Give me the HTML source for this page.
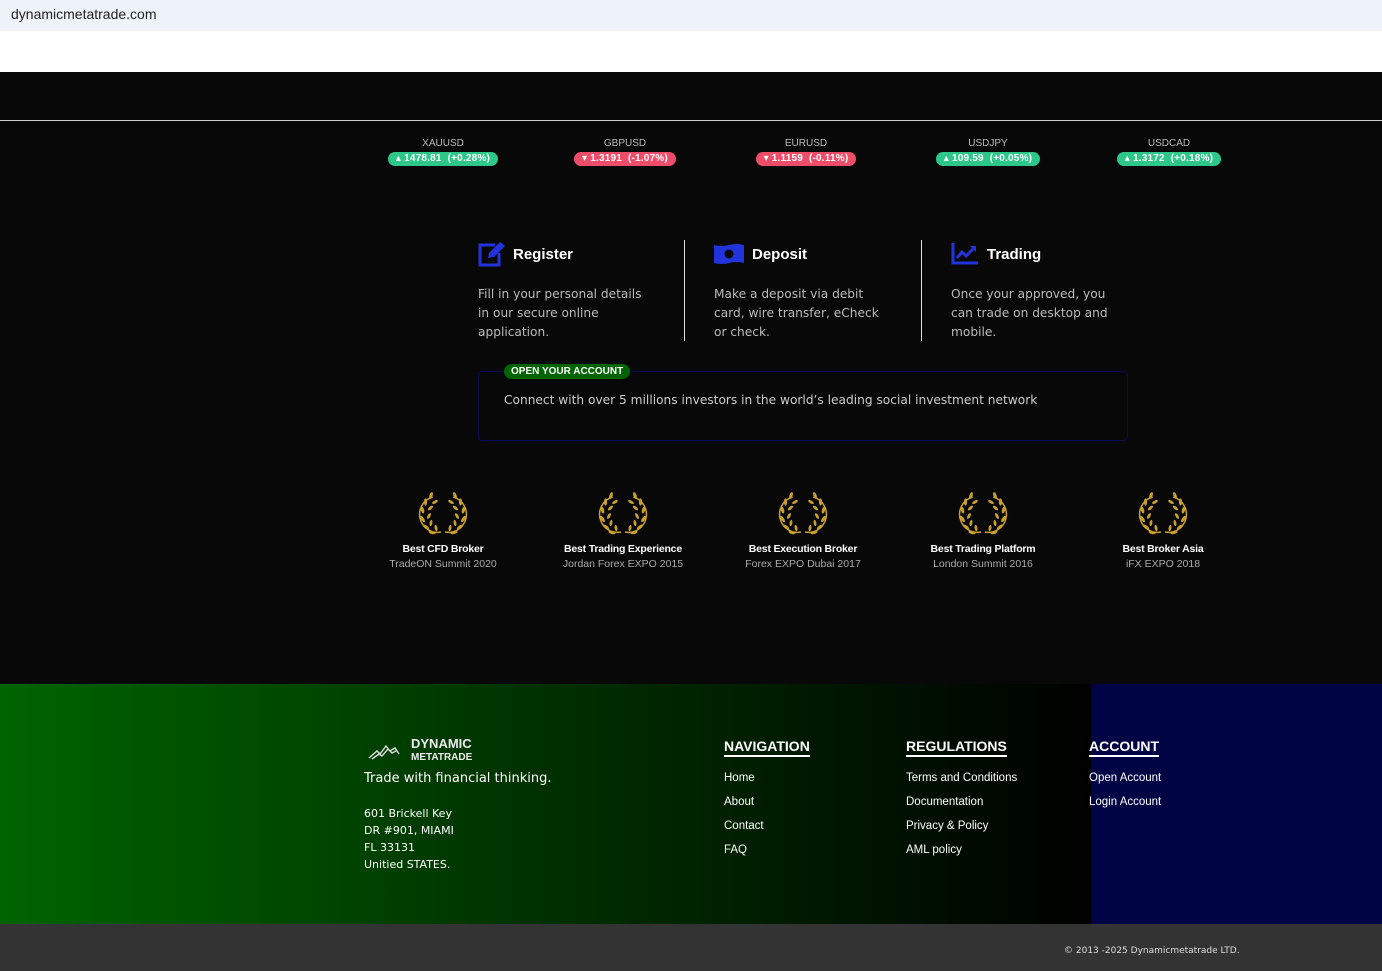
<!DOCTYPE html>
<html><head><meta charset="utf-8"><style>
*{margin:0;padding:0;box-sizing:border-box}
body{width:1382px;height:971px;overflow:hidden;background:#080808;font-family:"Liberation Sans","DejaVu Sans",sans-serif;position:relative;color:#fff}
.a{position:absolute}
.tk{position:absolute;top:138px;text-align:center;width:160px;font-size:10px;color:#bbb}
.pill{display:inline-block;margin-top:3px;border-radius:7px;font-size:10px;font-weight:bold;color:#fff;padding:1px 8px;line-height:12px;letter-spacing:0.2px}
.g{background:#2ec78a}.r{background:#ee4d6a}
.st{position:absolute;top:240px}
.st h3{font-size:15px;font-weight:bold;display:flex;align-items:center;gap:8px;height:28px}
.st p{margin-top:17px;font-family:"DejaVu Sans",sans-serif;font-size:12.2px;line-height:19px;color:#bbb;width:172px}
.vl{position:absolute;top:240px;width:1px;height:101px;background:#ddd}
.aw{position:absolute;top:492px;width:180px;text-align:center}
.aw b{display:block;font-size:10.5px;margin-top:0px;letter-spacing:-0.2px}
.aw span{display:block;font-size:10.5px;color:#aaa;margin-top:3px}
.fh{position:absolute;top:738px;font-size:14px;font-weight:bold;border-bottom:2px solid #fff;padding-bottom:1px}
.fl{position:absolute;font-size:11.5px;line-height:24px}
</style></head><body>
<div class="a" style="left:0;top:0;width:1382px;height:31px;background:#eef2f9;color:#222;font-size:14px;padding:6px 11px">dynamicmetatrade.com</div>
<div class="a" style="left:0;top:31px;width:1382px;height:41px;background:#fff"></div>
<div class="a" style="left:0;top:120px;width:1382px;height:1px;background:#ccc"></div>

<div class="tk" style="left:363px">XAUUSD<br><span class="pill g">▴ 1478.81 &nbsp;(+0.28%)</span></div>
<div class="tk" style="left:545px">GBPUSD<br><span class="pill r">▾ 1.3191 &nbsp;(-1.07%)</span></div>
<div class="tk" style="left:726px">EURUSD<br><span class="pill r">▾ 1.1159 &nbsp;(-0.11%)</span></div>
<div class="tk" style="left:908px">USDJPY<br><span class="pill g">▴ 109.59 &nbsp;(+0.05%)</span></div>
<div class="tk" style="left:1089px">USDCAD<br><span class="pill g">▴ 1.3172 &nbsp;(+0.18%)</span></div>

<div class="st" style="left:478px"><h3><svg width="27" height="25" viewBox="0 0 27 25"><path d="M17 3H2v20h19V11" fill="none" stroke="#2233dd" stroke-width="3"/><path d="M10 16l1-5L22 0l5 4-11 11z" fill="#2233dd"/></svg>Register</h3><p>Fill in your personal details in our secure online application.</p></div>
<div class="vl" style="left:684px"></div>
<div class="st" style="left:714px"><h3><svg width="30" height="22" viewBox="0 0 30 22"><path d="M0 2q8 2 15 0t15 0v18q-8-2-15 0t-15 0z" fill="#2233dd"/><circle cx="15" cy="11" r="4.5" fill="#080808"/></svg>Deposit</h3><p style="width:180px">Make a deposit via debit card, wire transfer, eCheck or check.</p></div>
<div class="vl" style="left:921px"></div>
<div class="st" style="left:951px"><h3><svg width="28" height="22" viewBox="0 0 28 22"><path d="M2 0v20h25" fill="none" stroke="#2233dd" stroke-width="3"/><path d="M6 15l5-6 4 4 7-7" fill="none" stroke="#2233dd" stroke-width="3"/><path d="M19 3h6v6z" fill="#2233dd"/></svg>Trading</h3><p style="width:180px">Once your approved, you can trade on desktop and mobile.</p></div>

<div class="a" style="left:478px;top:371px;width:650px;height:70px;border:1px solid #0b0b55;border-radius:4px"></div>
<div class="a" style="left:504px;top:364px;background:#006400;border-radius:8px;font-size:10px;font-weight:bold;padding:2px 7px">OPEN YOUR ACCOUNT</div>
<div class="a" style="left:504px;top:393px;font-family:'DejaVu Sans',sans-serif;font-size:12.2px;color:#ccc">Connect with over 5 millions investors in the world’s leading social investment network</div>

<svg width="0" height="0" style="position:absolute"><defs><g id="lr"><path d="M15.7 5A18 18 0 0 0 24 40" fill="none" stroke="#c9a030" stroke-width="1.5"/><g fill="#c9a030">
<ellipse cx="14" cy="3.5" rx="1.6" ry="3.6" transform="rotate(20 14 3.5)"/>
<ellipse cx="8.5" cy="10" rx="1.6" ry="3.6" transform="rotate(0 8.5 10)"/>
<ellipse cx="5.5" cy="18" rx="1.6" ry="3.6" transform="rotate(-15 5.5 18)"/>
<ellipse cx="5.5" cy="27" rx="1.6" ry="3.6" transform="rotate(-35 5.5 27)"/>
<ellipse cx="9" cy="35" rx="1.6" ry="3.6" transform="rotate(-55 9 35)"/>
<ellipse cx="15" cy="40.5" rx="1.6" ry="3.6" transform="rotate(-75 15 40.5)"/>
<ellipse cx="18" cy="10" rx="1.4" ry="3.2" transform="rotate(60 18 10)"/>
<ellipse cx="13.5" cy="16" rx="1.4" ry="3.2" transform="rotate(50 13.5 16)"/>
<ellipse cx="12" cy="24" rx="1.4" ry="3.2" transform="rotate(30 12 24)"/>
<ellipse cx="14" cy="31" rx="1.4" ry="3.2" transform="rotate(10 14 31)"/>
<ellipse cx="19" cy="36" rx="1.4" ry="3.2" transform="rotate(-10 19 36)"/>
</g></g><g id="lw"><use href="#lr"/><use href="#lr" transform="translate(52 0) scale(-1 1)"/></g></defs></svg>
<div class="aw" style="left:353px"><svg width="52" height="46"><use href="#lw"/></svg><b>Best CFD Broker</b><span>TradeON Summit 2020</span></div>
<div class="aw" style="left:533px"><svg width="52" height="46"><use href="#lw"/></svg><b>Best Trading Experience</b><span>Jordan Forex EXPO 2015</span></div>
<div class="aw" style="left:713px"><svg width="52" height="46"><use href="#lw"/></svg><b>Best Execution Broker</b><span>Forex EXPO Dubai 2017</span></div>
<div class="aw" style="left:893px"><svg width="52" height="46"><use href="#lw"/></svg><b>Best Trading Platform</b><span>London Summit 2016</span></div>
<div class="aw" style="left:1073px"><svg width="52" height="46"><use href="#lw"/></svg><b>Best Broker Asia</b><span>iFX EXPO 2018</span></div>

<div class="a" style="left:0;top:684px;width:1091px;height:240px;background:linear-gradient(90deg,#006400,#003000 50%,#000 100%)"></div>
<div class="a" style="left:1091px;top:684px;width:291px;height:240px;background:#000445"></div>
<div class="a" style="left:0;top:924px;width:1382px;height:47px;background:#333"></div>

<svg class="a" style="left:368px;top:738px" width="42" height="22" viewBox="0 0 42 22"><path d="M1 20l8-7 3 3 6-8 4 5 5-3 4 6M4 21l7-5 3 2 6-7 4 4 4-2" fill="none" stroke="#ddd" stroke-width="1.4"/></svg>
<div class="a" style="left:411px;top:738px;font-weight:bold;font-size:13px;line-height:12px;color:#eee">DYNAMIC<br><span style="font-size:10px">METATRADE</span></div>
<div class="a" style="left:364px;top:771px;font-family:'DejaVu Sans',sans-serif;font-size:13px">Trade with financial thinking.</div>
<div class="a" style="left:364px;top:805px;font-family:'DejaVu Sans',sans-serif;font-size:11px;line-height:17px">601 Brickell Key<br>DR #901, MIAMI<br>FL 33131<br>Unitied STATES.</div>

<div class="fh" style="left:724px">NAVIGATION</div>
<div class="fl" style="left:724px;top:766px">Home<br>About<br>Contact<br>FAQ</div>
<div class="fh" style="left:906px">REGULATIONS</div>
<div class="fl" style="left:906px;top:766px">Terms and Conditions<br>Documentation<br>Privacy &amp; Policy<br>AML policy</div>
<div class="fh" style="left:1089px">ACCOUNT</div>
<div class="fl" style="left:1089px;top:766px">Open Account<br>Login Account</div>
<div class="a" style="left:1064px;top:946px;font-family:'DejaVu Sans',sans-serif;font-size:9px;color:#ddd">© 2013 -2025 Dynamicmetatrade LTD.</div>
</body></html>
